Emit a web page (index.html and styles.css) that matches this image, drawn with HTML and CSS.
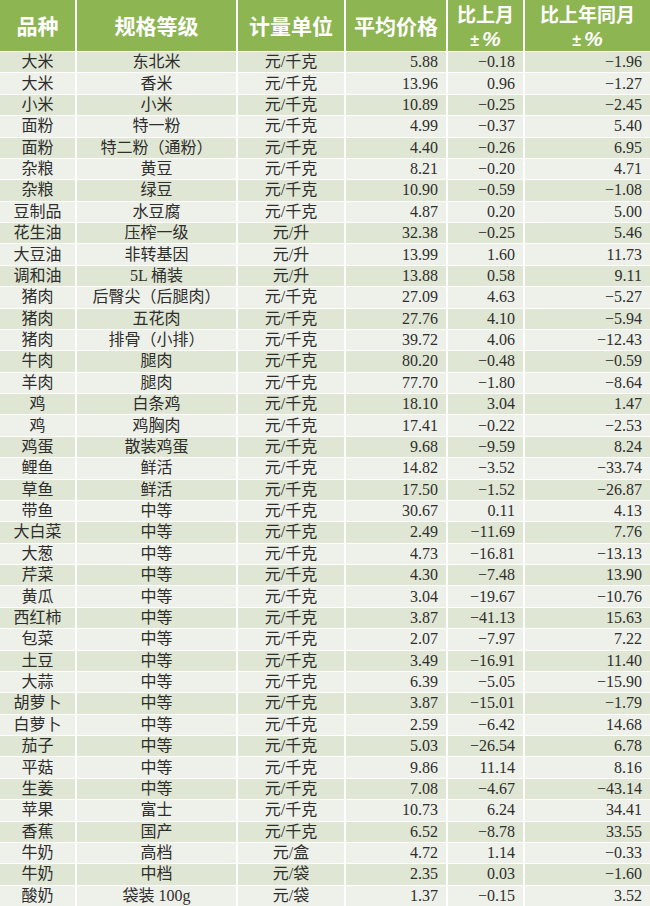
FILE: index.html
```html
<!DOCTYPE html>
<html lang="zh">
<head>
<meta charset="utf-8">
<title>农产品价格</title>
<link rel="stylesheet" href="styles.css">
</head>
<body>
<div class="tbl">
  <div class="row head">
    <span>品种</span><span>规格等级</span><span>计量单位</span><span>平均价格</span><span class="two"><b>比上月</b><i><small>±</small>%</i></span><span class="two"><b>比上年同月</b><i><small>±</small>%</i></span>
  </div>
  <div class="row g"><span>大米</span><span>东北米</span><span>元/千克</span><span class="n">5.88</span><span class="n">−0.18</span><span class="n">−1.96</span></div>
  <div class="row l"><span>大米</span><span>香米</span><span>元/千克</span><span class="n">13.96</span><span class="n">0.96</span><span class="n">−1.27</span></div>
  <div class="row g"><span>小米</span><span>小米</span><span>元/千克</span><span class="n">10.89</span><span class="n">−0.25</span><span class="n">−2.45</span></div>
  <div class="row l"><span>面粉</span><span>特一粉</span><span>元/千克</span><span class="n">4.99</span><span class="n">−0.37</span><span class="n">5.40</span></div>
  <div class="row g"><span>面粉</span><span>特二粉（通粉）</span><span>元/千克</span><span class="n">4.40</span><span class="n">−0.26</span><span class="n">6.95</span></div>
  <div class="row l"><span>杂粮</span><span>黄豆</span><span>元/千克</span><span class="n">8.21</span><span class="n">−0.20</span><span class="n">4.71</span></div>
  <div class="row g"><span>杂粮</span><span>绿豆</span><span>元/千克</span><span class="n">10.90</span><span class="n">−0.59</span><span class="n">−1.08</span></div>
  <div class="row l"><span>豆制品</span><span>水豆腐</span><span>元/千克</span><span class="n">4.87</span><span class="n">0.20</span><span class="n">5.00</span></div>
  <div class="row g"><span>花生油</span><span>压榨一级</span><span>元/升</span><span class="n">32.38</span><span class="n">−0.25</span><span class="n">5.46</span></div>
  <div class="row l"><span>大豆油</span><span>非转基因</span><span>元/升</span><span class="n">13.99</span><span class="n">1.60</span><span class="n">11.73</span></div>
  <div class="row g"><span>调和油</span><span>5L 桶装</span><span>元/升</span><span class="n">13.88</span><span class="n">0.58</span><span class="n">9.11</span></div>
  <div class="row l"><span>猪肉</span><span>后臀尖（后腿肉）</span><span>元/千克</span><span class="n">27.09</span><span class="n">4.63</span><span class="n">−5.27</span></div>
  <div class="row g"><span>猪肉</span><span>五花肉</span><span>元/千克</span><span class="n">27.76</span><span class="n">4.10</span><span class="n">−5.94</span></div>
  <div class="row l"><span>猪肉</span><span>排骨（小排）</span><span>元/千克</span><span class="n">39.72</span><span class="n">4.06</span><span class="n">−12.43</span></div>
  <div class="row g"><span>牛肉</span><span>腿肉</span><span>元/千克</span><span class="n">80.20</span><span class="n">−0.48</span><span class="n">−0.59</span></div>
  <div class="row l"><span>羊肉</span><span>腿肉</span><span>元/千克</span><span class="n">77.70</span><span class="n">−1.80</span><span class="n">−8.64</span></div>
  <div class="row g"><span>鸡</span><span>白条鸡</span><span>元/千克</span><span class="n">18.10</span><span class="n">3.04</span><span class="n">1.47</span></div>
  <div class="row l"><span>鸡</span><span>鸡胸肉</span><span>元/千克</span><span class="n">17.41</span><span class="n">−0.22</span><span class="n">−2.53</span></div>
  <div class="row g"><span>鸡蛋</span><span>散装鸡蛋</span><span>元/千克</span><span class="n">9.68</span><span class="n">−9.59</span><span class="n">8.24</span></div>
  <div class="row l"><span>鲤鱼</span><span>鲜活</span><span>元/千克</span><span class="n">14.82</span><span class="n">−3.52</span><span class="n">−33.74</span></div>
  <div class="row g"><span>草鱼</span><span>鲜活</span><span>元/千克</span><span class="n">17.50</span><span class="n">−1.52</span><span class="n">−26.87</span></div>
  <div class="row l"><span>带鱼</span><span>中等</span><span>元/千克</span><span class="n">30.67</span><span class="n">0.11</span><span class="n">4.13</span></div>
  <div class="row g"><span>大白菜</span><span>中等</span><span>元/千克</span><span class="n">2.49</span><span class="n">−11.69</span><span class="n">7.76</span></div>
  <div class="row l"><span>大葱</span><span>中等</span><span>元/千克</span><span class="n">4.73</span><span class="n">−16.81</span><span class="n">−13.13</span></div>
  <div class="row g"><span>芹菜</span><span>中等</span><span>元/千克</span><span class="n">4.30</span><span class="n">−7.48</span><span class="n">13.90</span></div>
  <div class="row l"><span>黄瓜</span><span>中等</span><span>元/千克</span><span class="n">3.04</span><span class="n">−19.67</span><span class="n">−10.76</span></div>
  <div class="row g"><span>西红柿</span><span>中等</span><span>元/千克</span><span class="n">3.87</span><span class="n">−41.13</span><span class="n">15.63</span></div>
  <div class="row l"><span>包菜</span><span>中等</span><span>元/千克</span><span class="n">2.07</span><span class="n">−7.97</span><span class="n">7.22</span></div>
  <div class="row g"><span>土豆</span><span>中等</span><span>元/千克</span><span class="n">3.49</span><span class="n">−16.91</span><span class="n">11.40</span></div>
  <div class="row l"><span>大蒜</span><span>中等</span><span>元/千克</span><span class="n">6.39</span><span class="n">−5.05</span><span class="n">−15.90</span></div>
  <div class="row g"><span>胡萝卜</span><span>中等</span><span>元/千克</span><span class="n">3.87</span><span class="n">−15.01</span><span class="n">−1.79</span></div>
  <div class="row l"><span>白萝卜</span><span>中等</span><span>元/千克</span><span class="n">2.59</span><span class="n">−6.42</span><span class="n">14.68</span></div>
  <div class="row g"><span>茄子</span><span>中等</span><span>元/千克</span><span class="n">5.03</span><span class="n">−26.54</span><span class="n">6.78</span></div>
  <div class="row l"><span>平菇</span><span>中等</span><span>元/千克</span><span class="n">9.86</span><span class="n">11.14</span><span class="n">8.16</span></div>
  <div class="row g"><span>生姜</span><span>中等</span><span>元/千克</span><span class="n">7.08</span><span class="n">−4.67</span><span class="n">−43.14</span></div>
  <div class="row l"><span>苹果</span><span>富士</span><span>元/千克</span><span class="n">10.73</span><span class="n">6.24</span><span class="n">34.41</span></div>
  <div class="row g"><span>香蕉</span><span>国产</span><span>元/千克</span><span class="n">6.52</span><span class="n">−8.78</span><span class="n">33.55</span></div>
  <div class="row l"><span>牛奶</span><span>高档</span><span>元/盒</span><span class="n">4.72</span><span class="n">1.14</span><span class="n">−0.33</span></div>
  <div class="row g"><span>牛奶</span><span>中档</span><span>元/袋</span><span class="n">2.35</span><span class="n">0.03</span><span class="n">−1.60</span></div>
  <div class="row l"><span>酸奶</span><span>袋装 100g</span><span>元/袋</span><span class="n">1.37</span><span class="n">−0.15</span><span class="n">3.52</span></div>
</div>
</body>
</html>
```
FILE: styles.css
```css
html, body {
  margin: 0;
  padding: 0;
  background: #ffffff;
}
.tbl {
  width: 650px;
  height: 906px;
  display: grid;
  grid-template-columns: 75px 159px 106px 100px 75px 1fr;
  grid-template-rows: 51px repeat(40, 1fr);
  column-gap: 2px;
  row-gap: 1px;
  background: #ffffff;
  font-family: "Liberation Serif", "Noto Sans CJK SC", serif;
  font-size: 16px;
  color: #2e2e2e;
}
.row {
  display: contents;
}
.row > span {
  display: flex;
  align-items: center;
  justify-content: center;
  white-space: nowrap;
  line-height: 1;
}
.row > span.n {
  justify-content: flex-end;
  padding-right: 8px;
}
.row.g > span {
  background: #dfe6d3;
}
.row.l > span {
  background: #eef1e9;
}
.head > span {
  background: #8db552;
  color: #ffffff;
  font-family: "Noto Sans CJK SC", sans-serif;
  font-weight: 700;
  font-size: 21px;
}
.head > span.two {
  flex-direction: column;
  line-height: normal;
}
.head > span.two b {
  display: block;
  font-size: 19px;
  font-weight: 700;
}
.head > span.two i {
  display: block;
  font-family: "Liberation Sans", sans-serif;
  font-style: italic;
  font-weight: 700;
  font-size: 21px;
}
.head > span.two i small {
  font-size: 16px;
  font-style: normal;
  margin-right: 3px;
}
```
